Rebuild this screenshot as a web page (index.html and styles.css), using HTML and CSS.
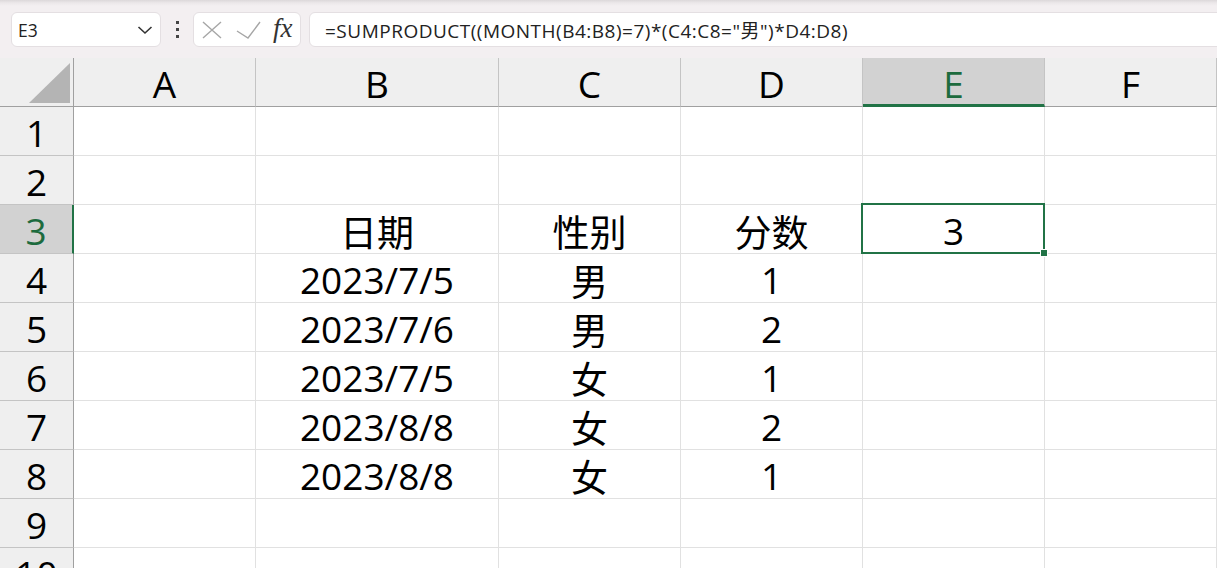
FILE: index.html
```html
<!DOCTYPE html>
<html lang="zh-CN">

  <head>
    <meta charset="UTF-8">
    <meta name="viewport" content="width=device-width, initial-scale=1.0">
    <title>Excel</title>
    <link rel="stylesheet" href="styles.css">
  </head>

  <body>
    <!-- 위: 이름상자 + 수식입력줄 -->
    <header class="toolbar">
      <div class="namebox">
        <span>E3</span>
        <svg class="chev" width="16" height="10" viewBox="0 0 16 10">
          <path d="M1.5 2 L8 8 L14.5 2" fill="none" stroke="#333" stroke-width="1.6"/>
        </svg>
      </div>
      <div class="dots"><i></i><i></i><i></i></div>
      <div class="fxbox">
        <svg width="20" height="18" viewBox="0 0 20 18">
          <path d="M1 1 L19 17 M19 1 L1 17" stroke="#a6a6a6" stroke-width="1.4" fill="none"/>
        </svg>
        <svg width="25" height="18" viewBox="0 0 25 18">
          <path d="M1 10 L12 17 L24 1" stroke="#a6a6a6" stroke-width="1.4" fill="none"/>
        </svg>
        <span class="fx">fx</span>
      </div>
      <div class="formula">=SUMPRODUCT((MONTH(B4:B8)=7)*(C4:C8="男")*D4:D8)</div>
    </header>

    <section class="sheet">
      <div class="corner"><span class="tri"></span></div>
      <div class="colhead">A</div>
      <div class="colhead">B</div>
      <div class="colhead">C</div>
      <div class="colhead">D</div>
      <div class="colhead on">E</div>
      <div class="colhead">F</div>

      <div class="rowhead">1</div>
      <div class="cell"></div><div class="cell"></div><div class="cell"></div><div class="cell"></div><div class="cell"></div><div class="cell"></div>

      <div class="rowhead">2</div>
      <div class="cell"></div><div class="cell"></div><div class="cell"></div><div class="cell"></div><div class="cell"></div><div class="cell"></div>

      <div class="rowhead on">3</div>
      <div class="cell"></div><div class="cell">日期</div><div class="cell">性别</div><div class="cell">分数</div><div class="cell sel">3</div><div class="cell"></div>

      <div class="rowhead">4</div>
      <div class="cell"></div><div class="cell">2023/7/5</div><div class="cell">男</div><div class="cell">1</div><div class="cell"></div><div class="cell"></div>

      <div class="rowhead">5</div>
      <div class="cell"></div><div class="cell">2023/7/6</div><div class="cell">男</div><div class="cell">2</div><div class="cell"></div><div class="cell"></div>

      <div class="rowhead">6</div>
      <div class="cell"></div><div class="cell">2023/7/5</div><div class="cell">女</div><div class="cell">1</div><div class="cell"></div><div class="cell"></div>

      <div class="rowhead">7</div>
      <div class="cell"></div><div class="cell">2023/8/8</div><div class="cell">女</div><div class="cell">2</div><div class="cell"></div><div class="cell"></div>

      <div class="rowhead">8</div>
      <div class="cell"></div><div class="cell">2023/8/8</div><div class="cell">女</div><div class="cell">1</div><div class="cell"></div><div class="cell"></div>

      <div class="rowhead">9</div>
      <div class="cell"></div><div class="cell"></div><div class="cell"></div><div class="cell"></div><div class="cell"></div><div class="cell"></div>

      <div class="rowhead">10</div>
      <div class="cell"></div><div class="cell"></div><div class="cell"></div><div class="cell"></div><div class="cell"></div><div class="cell"></div>
    </section>
  </body>

</html>
```

FILE: styles.css
```css
body {
  margin: 0;
  height: 568px;
  overflow: hidden;
  background: #fff;
  font-family: "Open Sans", "Noto Sans CJK SC", sans-serif;
}

/* 수식입력줄 영역 */
.toolbar {
  height: 58px;
  box-sizing: border-box;
  padding: 12px 0 11px 11px;
  display: flex;
  align-items: stretch;
  background: linear-gradient(#dcd8da 0, #ece8ea 3px, #f3eff1 6px);
  overflow: hidden;
}

.namebox {
  width: 150px;
  box-sizing: border-box;
  display: flex;
  align-items: center;
  justify-content: space-between;
  padding: 0 7px 0 6px;
  background: #fff;
  border: 1px solid #e4dfe2;
  border-radius: 6px;
  font-size: 17.5px;
  color: #222;
}

.dots {
  width: 32px;
  display: flex;
  flex-direction: column;
  align-items: center;
  justify-content: center;
  gap: 4px;
}

.dots i {
  width: 3px;
  height: 3px;
  background: #444;
}

.fxbox {
  width: 108px;
  box-sizing: border-box;
  display: flex;
  align-items: center;
  gap: 14px;
  padding-left: 8px;
  background: #fff;
  border: 1px solid #e4dfe2;
  border-radius: 6px;
}

.fx {
  font-family: "Liberation Serif", serif;
  font-style: italic;
  font-size: 27px;
  line-height: 1;
  color: #333;
  margin-left: -2px;
  margin-top: -3px;
}

.formula {
  flex: 1;
  margin-left: 8px;
  margin-right: -10px;
  display: flex;
  align-items: center;
  padding-left: 15px;
  background: #fff;
  border: 1px solid #e4dfe2;
  border-radius: 6px;
  font-size: 19px;
  letter-spacing: 0.5px;
  color: #222;
  white-space: nowrap;
}

/* 시트 */
.sheet {
  display: grid;
  grid-template-columns: 74px 182px 243px 182px 182px 182px 1fr;
  grid-auto-rows: 49px;
  font-size: 37px;
}

.sheet > div {
  box-sizing: border-box;
  display: flex;
  align-items: center;
  justify-content: center;
  border-right: 1px solid #e1e1e1;
  border-bottom: 1px solid #e1e1e1;
  padding-top: 3px;
}

.sheet .corner {
  background: #efefef;
  border-right: 1px solid #a0a0a0;
  border-bottom: 1px solid #a0a0a0;
  position: relative;
}

.tri {
  position: absolute;
  right: 3px;
  bottom: 3px;
  width: 0;
  height: 0;
  border-left: 41px solid transparent;
  border-bottom: 40px solid #b4b4b4;
}

.sheet .colhead {
  background: #efefef;
  border-right: 1px solid #c4c4c4;
  border-bottom: 1px solid #a0a0a0;
}

.sheet .rowhead {
  background: #efefef;
  border-right: 1px solid #a0a0a0;
  border-bottom: 1px solid #c4c4c4;
}

/* 선택된 행/열 머리글 */
.sheet .colhead.on {
  background: #d2d2d2;
  color: #1d6b3e;
  border-bottom: 3px solid #217346;
  padding-top: 5px;
}

.sheet .rowhead.on {
  background: #d2d2d2;
  color: #1d6b3e;
  border-right: 2px solid #217346;
}

.cell.sel {
  position: relative;
}

.cell.sel::after {
  content: "";
  position: absolute;
  top: -2px;
  left: -2px;
  right: -1px;
  bottom: -1px;
  border: 2px solid #217346;
}

.cell.sel::before {
  content: "";
  position: absolute;
  right: -4px;
  bottom: -4px;
  width: 6px;
  height: 6px;
  background: #217346;
  border: 1px solid #fff;
  z-index: 1;
}
```
